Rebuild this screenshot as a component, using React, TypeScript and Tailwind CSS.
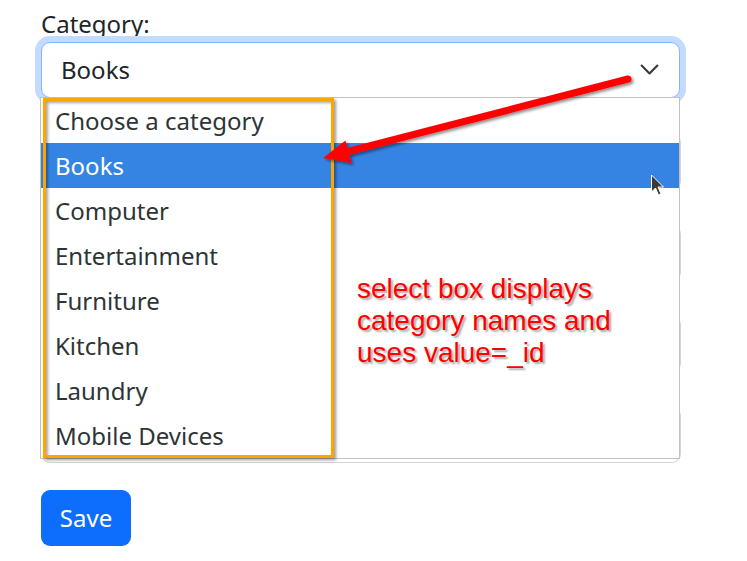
import React from "react";

const options = [
  "Choose a category",
  "Books",
  "Computer",
  "Entertainment",
  "Furniture",
  "Kitchen",
  "Laundry",
  "Mobile Devices",
];

export default function App() {
  return (
    <div
      className="relative w-[747px] h-[561px] bg-white overflow-hidden"
      style={{ fontFamily: '"Noto Sans", "Open Sans", sans-serif' }}
    >
      <div className="pl-[41px] pt-[6px] flex flex-col items-start">
        <label className="block text-[24px] leading-[36px] text-[#212529]">Category:</label>
        <div className="relative w-[639px] h-[56px] rounded-[9px] border border-[#86b7fe] shadow-[0_0_0_6px_#c2dbff] bg-white flex items-center pl-[19px] text-[24px] leading-[36px] text-[#212529]">
          Books
          <svg
            className="absolute right-[19px] top-[16px]"
            width="21"
            height="21"
            viewBox="0 0 16 16"
            fill="none"
          >
            <path
              d="m2 5 6 6 6-6"
              stroke="#343a40"
              strokeWidth="1.6"
              strokeLinecap="round"
              strokeLinejoin="round"
            />
          </svg>
        </div>
        <div className="mt-[36px] flex flex-col gap-[35px]">
          {[0, 1, 2, 3].map((i) => (
            <div
              key={i}
              className="w-[640px] h-[56px] rounded-[9px] border border-[#d4d4d4] bg-white"
            />
          ))}
        </div>
        <button className="mt-[27px] w-[90px] h-[56px] rounded-[9px] bg-[#0d6efd] text-white text-[24px] leading-[36px] flex items-center justify-center">
          Save
        </button>
      </div>

      {/* open dropdown list */}
      <div className="absolute left-[40px] top-[97px] w-[640px] border border-[#c5c1bc] bg-white">
        {options.map((o) => (
          <div
            key={o}
            className={
              o === "Books"
                ? "h-[45px] flex items-center pl-[14px] text-[24px] text-white bg-[#3584e4]"
                : "h-[45px] flex items-center pl-[14px] text-[24px] text-[#2e3436]"
            }
          >
            {o}
          </div>
        ))}
      </div>

      {/* orange highlight box */}
      <div className="absolute left-[43px] top-[98px] w-[291px] h-[360px] border-[3px] border-[#ffa500] shadow-[2px_2px_3px_rgba(0,0,0,0.4),inset_2px_2px_3px_rgba(0,0,0,0.35)]" />

      {/* arrow + cursor */}
      <svg className="absolute left-0 top-0 pointer-events-none" width="747" height="561">
        <defs>
          <filter id="sh" x="-10%" y="-10%" width="130%" height="150%">
            <feDropShadow dx="2" dy="2" stdDeviation="1.5" floodColor="#000" floodOpacity="0.45" />
          </filter>
        </defs>
        <g filter="url(#sh)">
          <line x1="628" y1="79" x2="346" y2="152" stroke="#ff0000" strokeWidth="7" strokeLinecap="round" />
          <polygon points="323,158 351.5,163 345.5,140.5" fill="#ff0000" />
        </g>
        <g transform="translate(651.5,175)">
          <path
            d="M0 0 L0 17 L4 13 L7 20 L9.5 19 L6.5 12 L12 12 Z"
            fill="#3b3b3b"
            stroke="#ffffff"
            strokeWidth="1"
            strokeLinejoin="round"
          />
        </g>
      </svg>

      {/* annotation text */}
      <div
        className="absolute left-[357px] top-[273px] text-[28px] leading-[32px] text-[#ff0000]"
        style={{
          fontFamily: '"Liberation Sans", Arial, sans-serif',
          textShadow: "2px 2px 2px rgba(0,0,0,0.35)",
        }}
      >
        select box displays
        <br />
        category names and
        <br />
        uses value=_id
      </div>
    </div>
  );
}
